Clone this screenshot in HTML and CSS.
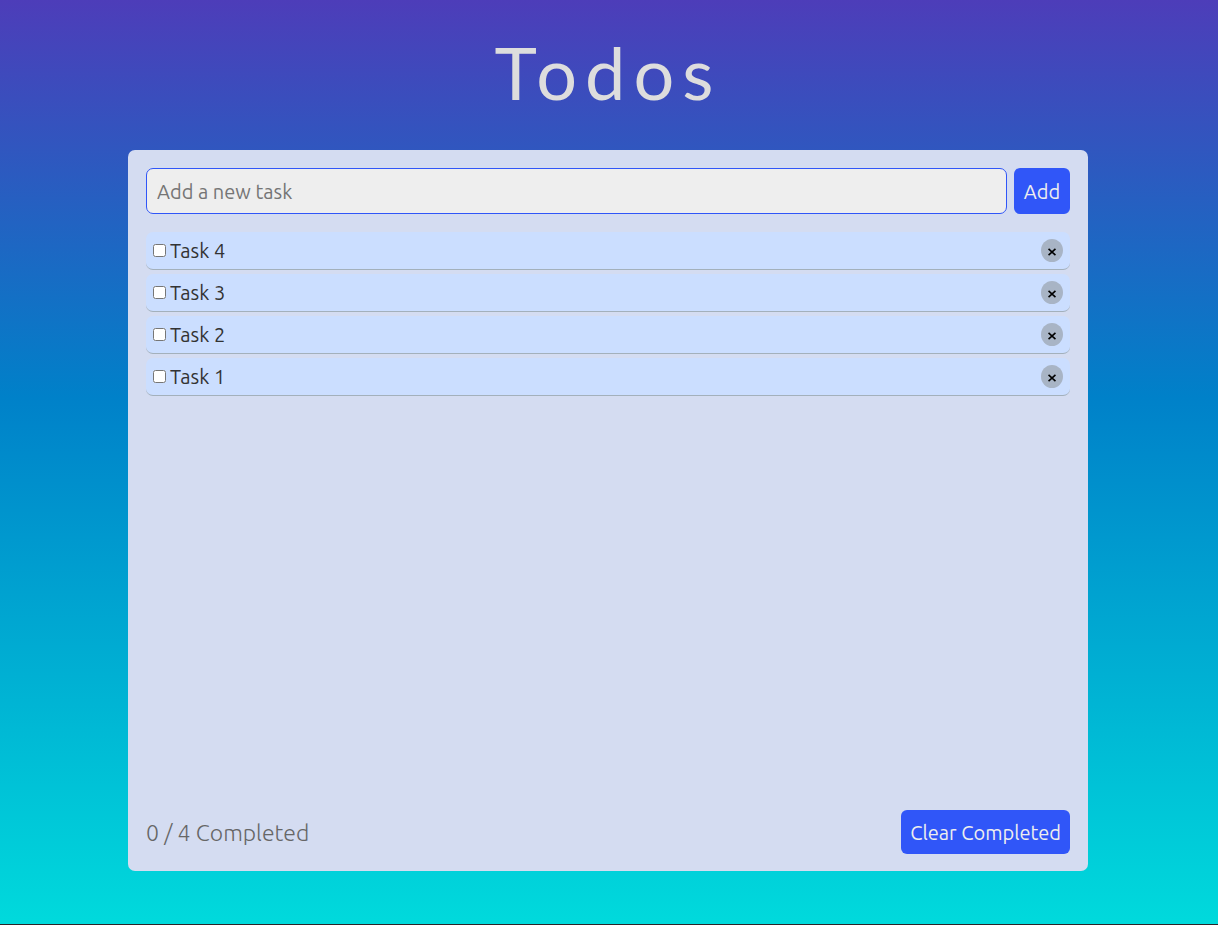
FILE: index.html
```html
<!DOCTYPE html>
<html lang="en">
<head>
<meta charset="utf-8">
<meta name="viewport" content="width=device-width, initial-scale=1">
<title>Todos</title>
<link rel="stylesheet" href="styles.css">
</head>
<body class="page">
<h1 class="title">Todos</h1>
<main class="card">
  <form class="add-form">
    <input class="add-input" type="text" placeholder="Add a new task" aria-label="Add a new task">
    <button class="button" type="button">Add</button>
  </form>
  <ul class="tasks">
    <li class="task">
      <label class="task-label"><input class="task-check" type="checkbox">Task 4</label>
      <button class="remove" type="button" aria-label="Remove Task 4"><svg class="remove-icon" viewBox="0 0 8 8"><path d="M.5 .9 7.5 7.1M7.5 .9 .5 7.1"/></svg></button>
    </li>
    <li class="task">
      <label class="task-label"><input class="task-check" type="checkbox">Task 3</label>
      <button class="remove" type="button" aria-label="Remove Task 3"><svg class="remove-icon" viewBox="0 0 8 8"><path d="M.5 .9 7.5 7.1M7.5 .9 .5 7.1"/></svg></button>
    </li>
    <li class="task">
      <label class="task-label"><input class="task-check" type="checkbox">Task 2</label>
      <button class="remove" type="button" aria-label="Remove Task 2"><svg class="remove-icon" viewBox="0 0 8 8"><path d="M.5 .9 7.5 7.1M7.5 .9 .5 7.1"/></svg></button>
    </li>
    <li class="task">
      <label class="task-label"><input class="task-check" type="checkbox">Task 1</label>
      <button class="remove" type="button" aria-label="Remove Task 1"><svg class="remove-icon" viewBox="0 0 8 8"><path d="M.5 .9 7.5 7.1M7.5 .9 .5 7.1"/></svg></button>
    </li>
  </ul>
  <footer class="summary">
    <p class="count">0 / 4 Completed</p>
    <button class="button" type="button">Clear Completed</button>
  </footer>
</main>
</body>
</html>
```
FILE: styles.css
```css
* {
  box-sizing: border-box;
}

.page {
  display: flex;
  flex-direction: column;
  align-items: center;
  min-height: 100vh;
  margin: 0;
  padding: 22px 18px 53px 16px;
  border-bottom: 1px solid #2b2428;
  background: linear-gradient(#4d3db9, #0081c9 43%, #00dadc);
  color: #333;
  font-family: Ubuntu, "Noto Sans", "Open Sans", sans-serif;
  font-size: 20px;
}

.title {
  margin: 0 0 28px;
  color: #ddd;
  font-family: Lato, sans-serif;
  font-size: 72px;
  font-weight: 400;
  line-height: 100px;
  letter-spacing: 8px;
}

.card {
  display: flex;
  flex: 1;
  flex-direction: column;
  gap: 18px;
  width: 100%;
  max-width: 960px;
  padding: 18px 18px 17px;
  border-radius: 7px;
  background: #d4dcf1;
}

.add-form {
  display: flex;
  gap: 7px;
  height: 46px;
}

.add-input {
  flex: 1;
  min-width: 0;
  padding: 0 10px;
  border: 1px solid #3056f8;
  border-radius: 7px;
  background: #eee;
  color: #333;
  font: inherit;
}

.add-input::placeholder {
  color: #757575;
}

.button {
  min-width: 56px;
  min-height: 44px;
  padding: 0 9px;
  border: 0;
  border-radius: 6px;
  background: #3056f8;
  color: #eee;
  font: inherit;
}

.tasks {
  display: flex;
  flex: 1;
  flex-direction: column;
  gap: 4px;
  margin: 0;
  padding: 0;
  list-style: none;
}

.task {
  display: flex;
  align-items: center;
  justify-content: space-between;
  height: 38px;
  padding: 0 7px;
  border-bottom: 1px solid #a3b0bb;
  border-radius: 7px;
  background: #cbdeff;
}

.task-label {
  display: flex;
  align-items: center;
  gap: 4px;
}

.task-check {
  width: 13px;
  height: 13px;
  margin: 0;
}

.remove {
  display: grid;
  place-items: center;
  width: 22px;
  height: 23px;
  padding: 2px 0 0;
  border: 0;
  border-radius: 50%;
  background: #a8b4c5;
}

.remove-icon {
  width: 8px;
  height: 8px;
  fill: none;
  stroke: #000;
  stroke-width: 1.7;
}

.summary {
  display: flex;
  align-items: center;
  justify-content: space-between;
}

.count {
  margin: 0;
  color: #666;
  font-size: 23px;
  font-weight: 300;
}
```
